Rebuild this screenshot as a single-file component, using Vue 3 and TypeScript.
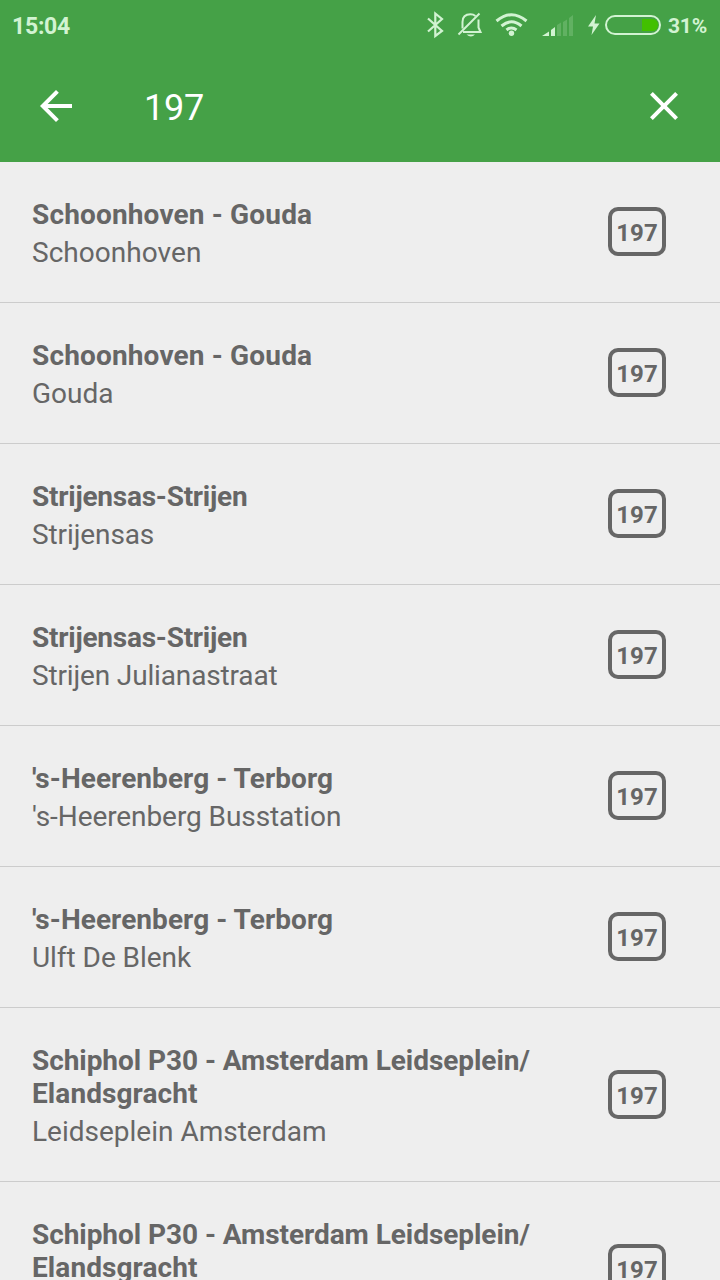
<script setup lang="ts">
interface Label {
  text: string
  tracking: number
}

interface Route {
  name: Label[]
  stop: Label
}

const label = (text: string, tracking = 0): Label => ({ text, tracking })
const spacing = (item: Label) => ({ letterSpacing: `${item.tracking}px` })

const line = '197'

const gouda = [label('Schoonhoven - Gouda', 0.16)]
const strijen = [label('Strijensas-Strijen', -0.24)]
const terborg = [label("'s-Heerenberg - Terborg", 0.06)]
const schiphol = [label('Schiphol P30 - Amsterdam Leidseplein/', -0.06), label('Elandsgracht', 0.08)]

const routes: Route[] = [
  { name: gouda, stop: label('Schoonhoven', 0.04) },
  { name: gouda, stop: label('Gouda') },
  { name: strijen, stop: label('Strijensas', -0.1) },
  { name: strijen, stop: label('Strijen Julianastraat', -0.15) },
  { name: terborg, stop: label("'s-Heerenberg Busstation", -0.08) },
  { name: terborg, stop: label('Ulft De Blenk', -0.05) },
  { name: schiphol, stop: label('Leidseplein Amsterdam') },
  { name: schiphol, stop: label('Schiphol P30') },
]
</script>

<template>
  <div class="screen">
    <header class="header">
      <div class="status">
        <span class="clock">15:04</span>
        <svg class="indicators" width="240" height="50" viewBox="0 0 240 50" fill="none" stroke="#d2f3d2">
          <path d="M8 18.500L22 31L15.300 36V13.500L22 19L8 31.500" stroke-width="2.200" />
          <g stroke-width="2">
            <path d="M42.500 28.500V22C42.500 16.500 46 14.300 50.500 14.300C52.500 14.300 54 14.800 55.500 16M58.500 19.500V27.500L60.500 32H43" />
            <path d="M38.500 34.500L59.500 13.500" />
          </g>
          <path d="M46.500 34.500H55Q51 38.500 46.500 34.500Z" fill="#d2f3d2" stroke="none" />
          <g stroke-width="3">
            <path d="M76.500 21Q91.500 8.500 106.500 21" />
            <path d="M81.500 26Q91.500 17.500 101.500 26" />
            <path d="M86.500 30Q91.500 26 96.500 30" />
          </g>
          <circle cx="91.500" cy="33.200" r="2.700" fill="#d2f3d2" stroke="none" />
          <g fill="#d2f3d2" stroke="none">
            <path d="M122 36L129 31.500V36Z" />
            <path d="M131 30L135 27V36H131Z" />
            <path d="M137 25L141 22.500V36H137Z" opacity=".2" />
            <path d="M143 22L147 19.500V36H143Z" opacity=".2" />
            <path d="M149 18L153 15V36H149Z" opacity=".2" />
            <path d="M176 15L168 26.500H173L171.500 35L179.500 23.500H174.500Z" />
          </g>
          <path d="M222 19H232.500Q238 19.500 238 25Q238 30.500 232.500 31H222Z" fill="#42c000" stroke="none" />
          <rect x="186" y="16" width="54" height="18" rx="9" stroke-width="2" />
        </svg>
        <span class="charge">31%</span>
      </div>
      <div class="search">
        <svg class="icon" viewBox="0 0 24 24" fill="#fff">
          <path d="M20 11H7.830l5.590-5.590L12 4l-8 8 8 8 1.410-1.410L7.830 13H20v-2z" />
        </svg>
        <span class="query">{{ line }}</span>
        <svg class="icon" viewBox="0 0 24 24" fill="#fff">
          <path d="M19 6.410L17.590 5 12 10.590 6.410 5 5 6.410 10.590 12 5 17.590 6.410 19 12 13.410 17.590 19 19 17.590 13.410 12z" />
        </svg>
      </div>
    </header>
    <main class="list">
      <article v-for="(route, i) in routes" :key="i" class="row">
        <div class="info">
          <div class="name">
            <div v-for="part in route.name" :key="part.text" :style="spacing(part)">{{ part.text }}</div>
          </div>
          <div class="stop" :style="spacing(route.stop)">{{ route.stop.text }}</div>
        </div>
        <div class="badge">{{ line }}</div>
      </article>
    </main>
  </div>
</template>

<style>
body {
  margin: 0;
  overflow: hidden;
}
</style>

<style scoped>
.screen {
  width: 720px;
  height: 1280px;
  overflow: hidden;
  background: #eee;
  color: #666;
  font-family: Roboto, sans-serif;
}
.header {
  height: 162px;
  background: #45a147;
}
.status {
  display: flex;
  align-items: center;
  height: 50px;
  padding: 0 12px;
  color: #d2f3d2;
  font-weight: 700;
  line-height: 50px;
}
.clock {
  flex: 1;
  padding-top: 3px;
  font-size: 23px;
  letter-spacing: -0.25px;
}
.indicators {
  flex: none;
  overflow: visible;
}
.charge {
  width: 40px;
  padding-top: 2px;
  margin-left: 8px;
  font-size: 21px;
  letter-spacing: -0.2px;
}
.search {
  display: flex;
  align-items: center;
  height: 112px;
  padding: 0 32px;
}
.icon {
  flex: none;
  width: 48px;
  height: 48px;
}
.query {
  flex: 1;
  padding-top: 4px;
  padding-left: 64px;
  color: #fff;
  font-size: 36px;
  letter-spacing: -0.25px;
  line-height: 42px;
}
.row {
  display: flex;
  align-items: center;
  justify-content: space-between;
  border-bottom: 1px solid #ccc;
  padding-right: 54px;
  padding-left: 32px;
}
.info {
  padding: 36px 0 33px;
  font-size: 28px;
  line-height: 33px;
  white-space: nowrap;
}
.name {
  font-weight: 700;
}
.stop {
  margin-top: 5px;
}
.badge {
  box-sizing: border-box;
  width: 58px;
  height: 49px;
  margin-bottom: 1px;
  border: 4px solid #666;
  border-radius: 10px;
  font-size: 24px;
  font-weight: 700;
  line-height: 44px;
  text-align: center;
}
</style>
